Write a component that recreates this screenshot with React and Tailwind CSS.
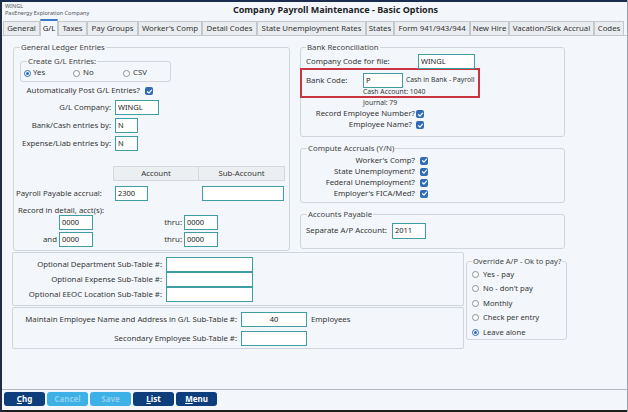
import React from 'react';

const tabs = [
  ['General', 'w-[37px]'],
  ['G/L', 'w-[18px]', true],
  ['Taxes', 'w-[29px]'],
  ['Pay Groups', 'w-[51px]'],
  ["Worker's Comp", 'w-[64px]'],
  ['Detail Codes', 'w-[55px]'],
  ['State Unemployment Rates', 'w-[109px]'],
  ['States', 'w-[28px]'],
  ['Form 941/943/944', 'w-[76px]'],
  ['New Hire', 'w-[39px]'],
  ['Vacation/Sick Accrual', 'w-[85px]'],
  ['Codes', 'w-[30px]'],
];

function Check() {
  return (
    <span className="flex h-[8px] w-[8px] shrink-0 items-center justify-center rounded-[2px] bg-[#2f6bb7]">
      <svg viewBox="0 0 10 10" className="h-[7px] w-[7px]">
        <path d="M2.2 5.3 L4.2 7.2 L7.9 3" fill="none" stroke="white" strokeWidth="1.7" strokeLinecap="round" strokeLinejoin="round" />
      </svg>
    </span>
  );
}

function Radio({ on }) {
  if (on) {
    return (
      <span className="flex h-[7px] w-[7px] shrink-0 items-center justify-center rounded-full border border-[#2f6bb7] bg-white">
        <span className="h-[3px] w-[3px] rounded-full bg-[#2f6bb7]" />
      </span>
    );
  }
  return <span className="h-[7px] w-[7px] shrink-0 rounded-full border border-[#8b9096] bg-white" />;
}

function Field({ w, h = 'h-[15px]', center, children }) {
  return (
    <div className={`${w} ${h} shrink-0 border border-[#3f9ea4] bg-white px-[2px] flex items-center text-[7.5px] text-[#222] ${center ? 'justify-center' : ''}`}>
      {children}
    </div>
  );
}

function Legend({ children, ml = 'ml-[6px]' }) {
  return <legend className={`${ml} px-[1px] text-[7.8px] leading-[10px] text-[#444] whitespace-nowrap`}>{children}</legend>;
}

function CheckRow({ label, lw, gap, h = 'h-[10px]', mt }) {
  return (
    <div className={`flex items-center ${h} ${mt}`}>
      <div className={`${lw} text-right whitespace-nowrap`}>{label}</div>
      <div className={gap}>
        <Check />
      </div>
    </div>
  );
}

export default function App() {
  return (
    <div className="flex h-[412px] w-[628px] flex-col overflow-hidden border-l-2 border-r border-l-[#1f2d45] border-r-[#9aa3ad] bg-[#f3f7fc] font-['Noto_Sans',sans-serif] text-[7.8px] text-[#363636]">
      <div className="h-[2px] shrink-0 bg-[#1b2c4f]" />

      {/* header */}
      <div className="flex h-[16px] shrink-0">
        <div className="w-[84px] pl-[3px] pt-[1px] text-[5.5px] leading-[6.5px] text-[#555] whitespace-nowrap">
          <div>WINGL</div>
          <div>PaxEnergy Exploration Company</div>
        </div>
        <div className="ml-[144px] w-[211px] whitespace-nowrap text-center text-[9px] font-bold leading-[16px] text-[#222]">
          Company Payroll Maintenance - Basic Options
        </div>
      </div>

      {/* tabs */}
      <div className="flex h-[18px] shrink-0 items-end border-b border-[#c3c8cd] pl-[1px]">
        {tabs.map(([name, w, active]) =>
          active ? (
            <div key={name} className={`${w} relative z-10 -mb-px flex h-[17px] items-center justify-center border-x border-t-2 border-x-[#c3c8cd] border-t-[#3c78c3] bg-[#f3f7fc] text-[7.8px] text-[#222] whitespace-nowrap`}>
              {name}
            </div>
          ) : (
            <div key={name} className={`${w} flex h-[14px] items-center justify-center border border-b-0 border-[#c3c8cd] bg-[#eaedf0] text-[7.8px] text-[#333] whitespace-nowrap`}>
              {name}
            </div>
          )
        )}
      </div>

      {/* upper row */}
      <div className="mt-[6px] flex shrink-0 gap-[10px] pl-[11px]">
        <fieldset className="h-[209px] w-[277px] rounded-[3px] border border-[#cfd5db]">
          <Legend>General Ledger Entries</Legend>
          <fieldset className="ml-[6px] mt-[4px] h-[26px] w-[151px] rounded-[3px] border border-[#cfd5db]">
            <Legend>Create G/L Entries:</Legend>
            <div className="mt-[2px] flex h-[10px] items-center pl-[3px]">
              <div className="flex w-[49px] items-center gap-[2px]"><Radio on /><span>Yes</span></div>
              <div className="flex w-[50px] items-center gap-[3px]"><Radio /><span>No</span></div>
              <div className="flex items-center gap-[3px]"><Radio /><span>CSV</span></div>
            </div>
          </fieldset>
          <CheckRow label="Automatically Post G/L Entries?" lw="w-[126px]" gap="ml-[5px]" mt="mt-[4px]" />
          <div className="mt-[4px] flex items-center">
            <div className="w-[97px] text-right">G/L Company:</div>
            <div className="ml-[4px]"><Field w="w-[44px]">WINGL</Field></div>
          </div>
          <div className="mt-[3px] flex items-center">
            <div className="w-[97px] text-right whitespace-nowrap">Bank/Cash entries by:</div>
            <div className="ml-[4px]"><Field w="w-[23px]">N</Field></div>
          </div>
          <div className="mt-[3px] flex items-center">
            <div className="w-[97px] text-right whitespace-nowrap">Expense/Liab entries by:</div>
            <div className="ml-[4px]"><Field w="w-[23px]">N</Field></div>
          </div>
          <div className="ml-[99px] mt-[15px] flex h-[15px]">
            <div className="flex w-[86px] items-center justify-center border border-[#d5d9dd] bg-[#eceff2]">Account</div>
            <div className="flex w-[86px] items-center justify-center border border-l-0 border-[#d5d9dd] bg-[#eceff2]">Sub-Account</div>
          </div>
          <div className="mt-[5px] flex items-center">
            <div className="w-[101px] pl-[2px] whitespace-nowrap">Payroll Payable accrual:</div>
            <Field w="w-[33px]">2300</Field>
            <div className="ml-[54px]"><Field w="w-[82px]" /></div>
          </div>
          <div className="mt-[4px] h-[10px] pl-[4px] leading-[10px]">Record in detail, acct(s):</div>
          <div className="flex items-center">
            <div className="w-[43px]" />
            <div className="ml-[2px]"><Field w="w-[34px]">0000</Field></div>
            <div className="w-[89px] text-right">thru:</div>
            <div className="ml-[2px]"><Field w="w-[34px]">0000</Field></div>
          </div>
          <div className="mt-[2px] flex items-center">
            <div className="w-[43px] text-right">and</div>
            <div className="ml-[2px]"><Field w="w-[34px]">0000</Field></div>
            <div className="w-[89px] text-right">thru:</div>
            <div className="ml-[2px]"><Field w="w-[34px]">0000</Field></div>
          </div>
        </fieldset>

        <div className="flex w-[265px] flex-col">
          <fieldset className="h-[95px] rounded-[3px] border border-[#cfd5db]">
            <Legend ml="ml-[5px]">Bank Reconciliation</Legend>
            <div className="mt-[2px] flex items-center">
              <div className="w-[117px] pl-[5px]">Company Code for file:</div>
              <Field w="w-[57px]">WINGL</Field>
            </div>
            <div className="-ml-[1px] -mt-[1px] h-[30px] w-[180px] border-2 border-[#c9343e]">
              <div className="mt-[3px] flex items-center">
                <div className="w-[61px] pl-[4px]">Bank Code:</div>
                <Field w="w-[40px]">P</Field>
                <div className="ml-[3px] text-[6.8px] whitespace-nowrap">Cash in Bank - Payroll</div>
              </div>
              <div className="h-[8px] pl-[61px] text-[6.8px] leading-[8px]">Cash Account: 1040</div>
            </div>
            <div className="h-[9px] pl-[62px] text-[6.8px] leading-[9px]">Journal: 79</div>
            <CheckRow label="Record Employee Number?" lw="w-[114px]" gap="ml-[1px]" mt="mt-[2px]" />
            <CheckRow label="Employee Name?" lw="w-[111px]" gap="ml-[4px]" mt="mt-[1px]" />
          </fieldset>

          <fieldset className="mt-[6px] h-[60px] rounded-[3px] border border-[#cfd5db]">
            <Legend>Compute Accruals (Y/N)</Legend>
            <div className="mt-[2px]">
              <CheckRow label="Worker's Comp?" lw="w-[114px]" gap="ml-[5px]" h="h-[11px]" />
              <CheckRow label="State Unemployment?" lw="w-[114px]" gap="ml-[5px]" h="h-[11px]" />
              <CheckRow label="Federal Unemployment?" lw="w-[114px]" gap="ml-[5px]" h="h-[11px]" />
              <CheckRow label="Employer's FICA/Med?" lw="w-[114px]" gap="ml-[5px]" h="h-[11px]" />
            </div>
          </fieldset>

          <fieldset className="mt-[6px] h-[40px] rounded-[3px] border border-[#cfd5db]">
            <Legend>Accounts Payable</Legend>
            <div className="mt-[4px] flex items-center">
              <div className="w-[91px] pl-[5px] whitespace-nowrap">Separate A/P Account:</div>
              <Field w="w-[34px]" h="h-[16px]">2011</Field>
            </div>
          </fieldset>
        </div>
      </div>

      {/* lower row */}
      <div className="mt-[1px] flex shrink-0 pl-[10px]">
        <div className="flex w-[452px] flex-col">
          <div className="h-[54px] rounded-[2px] border border-[#cfd5db] pt-[4px]">
            {['Optional Department Sub-Table #:', 'Optional Expense Sub-Table #:', 'Optional EEOC Location Sub-Table #:'].map((l) => (
              <div key={l} className="flex items-center">
                <div className="w-[149px] text-right whitespace-nowrap">{l}</div>
                <div className="ml-[4px]"><Field w="w-[87px]" /></div>
              </div>
            ))}
          </div>
          <div className="mt-[1px] h-[42px] rounded-[2px] border border-[#cfd5db] pt-[4px]">
            <div className="flex items-center">
              <div className="w-[224px] text-right whitespace-nowrap">Maintain Employee Name and Address in G/L Sub-Table #:</div>
              <div className="ml-[4px]"><Field w="w-[66px]" center>40</Field></div>
              <div className="ml-[4px]">Employees</div>
            </div>
            <div className="mt-[4px] flex items-center">
              <div className="w-[224px] text-right whitespace-nowrap">Secondary Employee Sub-Table #:</div>
              <div className="ml-[4px]"><Field w="w-[66px]" /></div>
            </div>
          </div>
        </div>

        <fieldset className="ml-[2px] mt-[5px] h-[83px] w-[101px] rounded-[3px] border border-[#cfd5db]">
          <legend className="ml-[5px] px-[1px] text-[7.5px] leading-[9px] text-[#444] whitespace-nowrap">Override A/P - Ok to pay?</legend>
          <div className="mt-[1px] pl-[5px]">
            {['Yes - pay', "No - don't pay", 'Monthly', 'Check per entry', 'Leave alone'].map((l, i) => (
              <div key={l} className="flex h-[14.5px] items-center gap-[4px] text-[7.6px]">
                <Radio on={i === 4} />
                <span>{l}</span>
              </div>
            ))}
          </div>
        </fieldset>
      </div>

      {/* footer */}
      <div className="mt-auto shrink-0 border-t border-[#b4b9bf] pb-[4px] pl-[2px] pt-[2px]">
        <div className="flex gap-[2px]">
          <div className="h-[14px] w-[41px] rounded-[3px] bg-[#0d3d7a] text-center text-[8px] font-bold leading-[14px] text-white"><span className="underline">C</span>hg</div>
          <div className="h-[14px] w-[41px] rounded-[3px] bg-[#3db0e6] text-center text-[8px] font-bold leading-[14px] text-[#8fcff0]">Cancel</div>
          <div className="h-[14px] w-[41px] rounded-[3px] bg-[#3db0e6] text-center text-[8px] font-bold leading-[14px] text-[#8fcff0]">Save</div>
          <div className="h-[14px] w-[41px] rounded-[3px] bg-[#0d3d7a] text-center text-[8px] font-bold leading-[14px] text-white"><span className="underline">L</span>ist</div>
          <div className="h-[14px] w-[41px] rounded-[3px] bg-[#0d3d7a] text-center text-[8px] font-bold leading-[14px] text-white"><span className="underline">M</span>enu</div>
        </div>
      </div>
      <div className="h-[2px] shrink-0 bg-[#1e1e1e]" />
    </div>
  );
}
